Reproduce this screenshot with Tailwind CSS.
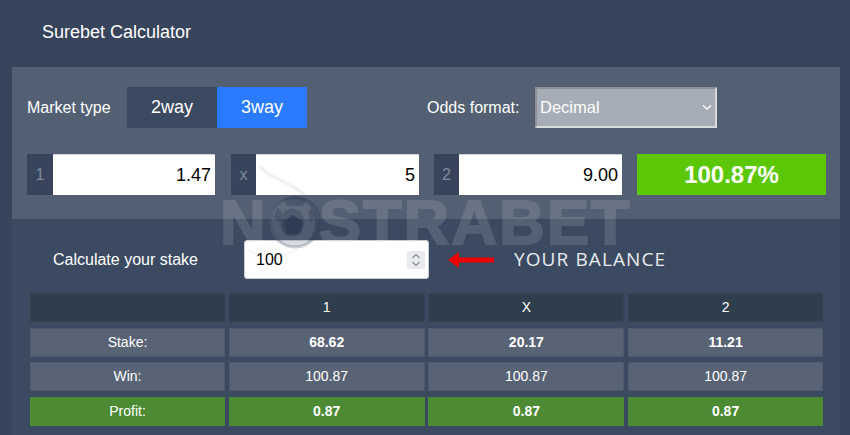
<!DOCTYPE html>
<html lang="en">

<head>
  <meta charset="UTF-8" />
  <title>Surebet Calculator</title>
  <script src="https://cdn.jsdelivr.net/npm/@tailwindcss/browser@4"></script>
</head>

<body class="bg-[#37445c] font-['Liberation_Sans',Arial,sans-serif] text-white overflow-hidden">
  <div class="relative w-[850px] h-[435px] overflow-hidden">
    <!-- Title -->
    <div class="h-[67px] pl-[42px] pt-[21px] text-[18px] leading-[22px]">Surebet Calculator</div>

    <!-- Settings panel -->
    <section class="ml-[12px] w-[828px] h-[152px] bg-[#535f73] pl-[15px] pt-[20px]">
      <div class="flex items-center h-[41px]">
        <span class="w-[100px] text-[16px]">Market type</span>
        <div class="flex text-[18px]">
          <button class="w-[90px] h-[41px] bg-[#3c4a61]">2way</button>
          <button class="w-[90px] h-[41px] bg-[#2a7bff]">3way</button>
        </div>
        <span class="ml-[120px] w-[108px] text-[16px]">Odds format:</span>
        <div class="relative">
          <select class="appearance-none block w-[182px] h-[41px] pl-[3px] bg-[#a7adb7] border-2 border-t-[#8d8f94] border-l-[#8d8f94] border-r-[#d9dbde] border-b-[#d9dbde] text-[16.500px] text-white">
            <option>Decimal</option>
          </select>
          <svg class="absolute right-[5px] top-[17px] w-[10px] h-[7px]" viewBox="0 0 10 7" fill="none" stroke="#fff" stroke-width="1.3"><path d="M1 1.2l4 4 4-4" /></svg>
        </div>
      </div>

      <div class="flex mt-[26px] h-[41px]">
        <div class="flex w-[188px]">
          <span class="w-[26px] bg-[#37445c] text-[#7f8a9c] text-[16px] flex items-center justify-center">1</span>
          <input class="w-[162px] bg-white border-t border-[#d0d4da] text-black text-right pr-[4px] text-[18px]" value="1.47" />
        </div>
        <div class="flex w-[188px] ml-[16px]">
          <span class="w-[25px] bg-[#37445c] text-[#7f8a9c] text-[16px] flex items-center justify-center">x</span>
          <input class="w-[163px] bg-white border-t border-[#d0d4da] text-black text-right pr-[4px] text-[18px]" value="5" />
        </div>
        <div class="flex w-[188px] ml-[15px]">
          <span class="w-[25px] bg-[#37445c] text-[#7f8a9c] text-[16px] flex items-center justify-center">2</span>
          <input class="w-[163px] bg-white border-t border-[#d0d4da] text-black text-right pr-[4px] text-[18px]" value="9.00" />
        </div>
        <div class="w-[189px] ml-[15px] bg-[#5cc706] flex items-center justify-center text-[24px] font-bold">100.87%</div>
      </div>
    </section>

    <!-- Stake and results -->
    <section class="ml-[12px] w-[828px] h-[216px] bg-[#3c4a61] pt-[21px] pl-[18px]">
      <div class="flex items-center h-[39px]">
        <span class="ml-[23px] w-[191px] text-[16px]">Calculate your stake</span>
        <div class="relative">
          <input class="block w-[185px] h-[39px] rounded-[3px] bg-white text-black text-[16px] pl-[11px] border border-[#c9ced6]" value="100" />
          <div class="absolute right-[4px] top-[11px] w-[18px] h-[18px] bg-[#eaebee] flex items-center justify-center">
            <svg class="w-[10px] h-[14px]" viewBox="0 0 10 14" fill="none" stroke="#8a8d93" stroke-width="1.2"><path d="M1.5 5l3.5-3.500L8.500 5M1.500 9l3.500 3.500L8.500 9" /></svg>
          </div>
        </div>
        <svg class="ml-[19px] w-[46px] h-[18px]" viewBox="0 0 46 18" fill="#ee0000"><path d="M0 9l11-8v5.500h35v5H11V17z" /></svg>
        <span class="ml-[20px] text-[19px] tracking-[1.100px] font-['Open_Sans',sans-serif] text-[#e8ebef]">YOUR BALANCE</span>
      </div>

      <div class="grid grid-cols-[195px_196px_196px_195px] gap-x-[3.700px] gap-y-[5.670px] w-[793px] mt-[14px] text-[14px] text-center">
        <div class="h-[29px] bg-[#2f3e4c] border border-[#344353]"></div>
        <div class="h-[29px] leading-[27px] bg-[#2f3e4c] border border-[#344353]">1</div>
        <div class="h-[29px] leading-[27px] bg-[#2f3e4c] border border-[#344353]">X</div>
        <div class="h-[29px] leading-[27px] bg-[#2f3e4c] border border-[#344353]">2</div>

        <div class="h-[29px] leading-[27px] bg-[#586375] border border-[#4d596d]">Stake:</div>
        <div class="h-[29px] leading-[27px] bg-[#586375] border border-[#4d596d] font-bold">68.62</div>
        <div class="h-[29px] leading-[27px] bg-[#586375] border border-[#4d596d] font-bold">20.17</div>
        <div class="h-[29px] leading-[27px] bg-[#586375] border border-[#4d596d] font-bold">11.21</div>

        <div class="h-[29px] leading-[27px] bg-[#586375] border border-[#4d596d]">Win:</div>
        <div class="h-[29px] leading-[27px] bg-[#586375] border border-[#4d596d]">100.87</div>
        <div class="h-[29px] leading-[27px] bg-[#586375] border border-[#4d596d]">100.87</div>
        <div class="h-[29px] leading-[27px] bg-[#586375] border border-[#4d596d]">100.87</div>

        <div class="h-[29px] leading-[29px] bg-[#4c8a33]">Profit:</div>
        <div class="h-[29px] leading-[29px] bg-[#4c8a33] font-bold">0.87</div>
        <div class="h-[29px] leading-[29px] bg-[#4c8a33] font-bold">0.87</div>
        <div class="h-[29px] leading-[29px] bg-[#4c8a33] font-bold">0.87</div>
      </div>
    </section>

    <!-- Watermark -->
    <div class="absolute left-[220px] top-[199px] pointer-events-none text-[63px] leading-[46px] font-bold tracking-[2.200px] text-white opacity-[0.12] [-webkit-text-stroke:2px_#fff]">NOSTRABET</div>
    <svg class="absolute left-[232px] top-[165px] w-[120px] h-[100px] pointer-events-none" viewBox="0 0 120 100" fill="none">
      <circle cx="63" cy="57" r="25" fill="#3c4a61" fill-opacity="0.2" stroke="#26344c" stroke-opacity="0.22" stroke-width="3" />
      <path d="M51 57l10-7 10 7-4 12H55z" fill="#2a3a52" fill-opacity="0.8" />
      <path d="M52 35l11-4 11 4-3 6H55zM41 52l5-9 4 4-2 11zM85 52l-5-9-4 4 2 11z" fill="#2a3a52" fill-opacity="0.35" />
      <path d="M28 1c8 12 28 14 46 30" stroke="#7e8794" stroke-opacity="0.12" stroke-width="3" />
      <path d="M38 96c10-2 20-8 28-12M16 84c6 6 14 10 22 10" stroke="#7e8794" stroke-opacity="0.08" stroke-width="2" />
    </svg>
  </div>
</body>

</html>
